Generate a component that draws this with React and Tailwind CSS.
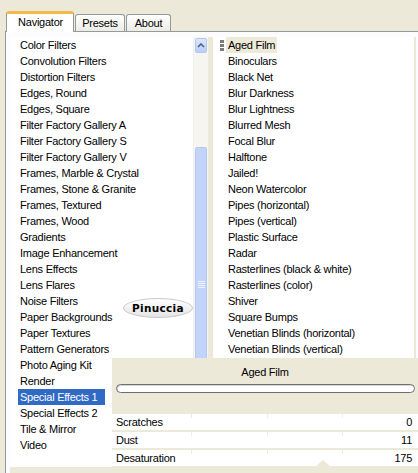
import React from 'react';

const filters = [
  'Color Filters',
  'Convolution Filters',
  'Distortion Filters',
  'Edges, Round',
  'Edges, Square',
  'Filter Factory Gallery A',
  'Filter Factory Gallery S',
  'Filter Factory Gallery V',
  'Frames, Marble & Crystal',
  'Frames, Stone & Granite',
  'Frames, Textured',
  'Frames, Wood',
  'Gradients',
  'Image Enhancement',
  'Lens Effects',
  'Lens Flares',
  'Noise Filters',
  'Paper Backgrounds',
  'Paper Textures',
  'Pattern Generators',
  'Photo Aging Kit',
  'Render',
  'Special Effects 1',
  'Special Effects 2',
  'Tile & Mirror',
  'Video',
];

const effects = [
  'Aged Film',
  'Binoculars',
  'Black Net',
  'Blur Darkness',
  'Blur Lightness',
  'Blurred Mesh',
  'Focal Blur',
  'Halftone',
  'Jailed!',
  'Neon Watercolor',
  'Pipes (horizontal)',
  'Pipes (vertical)',
  'Plastic Surface',
  'Radar',
  'Rasterlines (black & white)',
  'Rasterlines (color)',
  'Shiver',
  'Square Bumps',
  'Venetian Blinds (horizontal)',
  'Venetian Blinds (vertical)',
];

const params = [
  { name: 'Scratches', value: 0 },
  { name: 'Dust', value: 11 },
  { name: 'Desaturation', value: 175 },
];

const App = () => {
  return (
    <div className="relative w-[418px] h-[473px] overflow-hidden bg-[#ECE9D8] text-[11px] leading-[16px] tracking-[-0.25px] text-black font-['Liberation_Sans',Arial,sans-serif]">
      {/* Tabs */}
      <div className="flex items-end h-[31px] pl-[6px]">
        <div className="relative z-10 mb-[-1px] w-[68px] h-[21px] bg-white border-x border-[#919B9C] border-t-[3px] border-t-[#F5B94A] rounded-t-[3px] flex items-start justify-center">
          <span className="pl-[1px]">Navigator</span>
        </div>
        <div className="w-[50px] h-[17px] ml-[1px] bg-gradient-to-b from-white to-[#ECEBE5] border-x border-t border-[#919B9C] rounded-t-[3px] flex items-center justify-center">
          Presets
        </div>
        <div className="w-[45px] h-[17px] ml-[1px] bg-gradient-to-b from-white to-[#ECEBE5] border-x border-t border-[#919B9C] rounded-t-[3px] flex items-center justify-center">
          About
        </div>
      </div>

      {/* Tab panel */}
      <div className="ml-[5px] h-[442px] border-l border-t border-[#919B9C] bg-[#FCFCFE] pt-[5px] pl-[4px] pr-[2px]">
        <div className="flex h-full bg-[#ECE9D8] pr-[2px]">
          {/* Filter categories */}
          <div className="w-[183px] h-[430px] bg-white pl-[8px]">
            {filters.map((f) => (
              <div key={f} className="h-[16px]">
                <span
                  className={
                    f === 'Special Effects 1'
                      ? 'inline-block pl-[2px] pr-[8px] bg-[#316AC5] text-white'
                      : 'inline-block px-[2px]'
                  }
                >
                  {f}
                </span>
              </div>
            ))}
          </div>

          {/* Scrollbar */}
          <div className="w-[15px] flex flex-col bg-[#F6F5F0] border-l border-[#F0EFEA]">
            <div className="mx-[1px] mt-[1px] h-[15px] rounded-[2px] border border-[#B3C7F3] bg-gradient-to-b from-[#DCE6FD] to-[#BBCEFA] flex items-center justify-center">
              <svg width="8" height="5" viewBox="0 0 8 5">
                <path d="M1 4 L4 1 L7 4" fill="none" stroke="#4D6185" strokeWidth="1.6" />
              </svg>
            </div>
            <div className="h-[94px]" />
            <div className="flex-1 mx-[1px] rounded-[2px] border border-[#B4C8F3] bg-[#C3D4FC] flex flex-col items-center pt-[133px]">
              <div className="w-[7px] h-[1px] bg-[#EEF3FE]" />
              <div className="w-[7px] h-[1px] mt-[1px] bg-[#EEF3FE]" />
              <div className="w-[7px] h-[1px] mt-[1px] bg-[#EEF3FE]" />
              <div className="w-[7px] h-[1px] mt-[1px] bg-[#EEF3FE]" />
            </div>
          </div>

          <div className="w-[5px]" />

          {/* Effects */}
          <div className="flex-1 h-full bg-white pl-[7px]">
            {effects.map((e, i) => (
              <div key={e} className="h-[16px] flex items-center">
                <div className="w-[6px] h-[16px] flex flex-col justify-center gap-[1px]">
                  {i === 0 && (
                    <>
                      <div className="w-[4px] h-[3px] bg-[#7B7B7B]" />
                      <div className="w-[4px] h-[3px] bg-[#7B7B7B]" />
                      <div className="w-[4px] h-[3px] bg-[#7B7B7B]" />
                    </>
                  )}
                </div>
                <span className={i === 0 ? 'px-[2px] bg-[#EDEAD8]' : 'px-[2px]'}>{e}</span>
              </div>
            ))}
          </div>
        </div>
      </div>

      {/* Watermark */}
      <div className="absolute left-[123px] top-[298px] w-[70px] h-[20px] rounded-[50%] border border-[#C9C9C9] bg-gradient-to-b from-white to-[#E4E4E4] flex items-center justify-center">
        <span className="font-['DejaVu_Sans',sans-serif] font-bold text-[10.5px] tracking-[0.3px]">Pinuccia</span>
      </div>

      {/* Effect preview panel */}
      <div className="absolute left-[112px] top-[358px] right-0 bottom-0 bg-[#ECE9D8] flex flex-col">
        <div className="h-[26px] flex items-center justify-center pt-[1px]">Aged Film</div>
        <div className="ml-[4px] mr-[3px] h-[9px] rounded-full border border-[#6E6E6E] bg-white shadow-[inset_1px_1px_0_#D8D8D8]" />
        <div className="h-[21px]" />
        <div className="flex flex-col gap-[2px]">
          {params.map((p) => (
            <div key={p.name} className="relative h-[16px] bg-white flex items-center justify-between pl-[4px] pr-[6px]">
              <span>{p.name}</span>
              <span>{p.value}</span>
              <div className="absolute left-[79px] top-0 w-[1px] h-[4px] bg-[#EFEDE2]" />
              <div className="absolute left-[155px] top-0 w-[1px] h-[4px] bg-[#EFEDE2]" />
              <div className="absolute left-[230px] top-0 w-[1px] h-[4px] bg-[#EFEDE2]" />
            </div>
          ))}
        </div>
        <div className="absolute left-[203px] top-[102px] w-0 h-0 border-x-[8px] border-x-transparent border-b-[7px] border-b-[#ECE9D8]" />
      </div>
    </div>
  );
};

export default App;
